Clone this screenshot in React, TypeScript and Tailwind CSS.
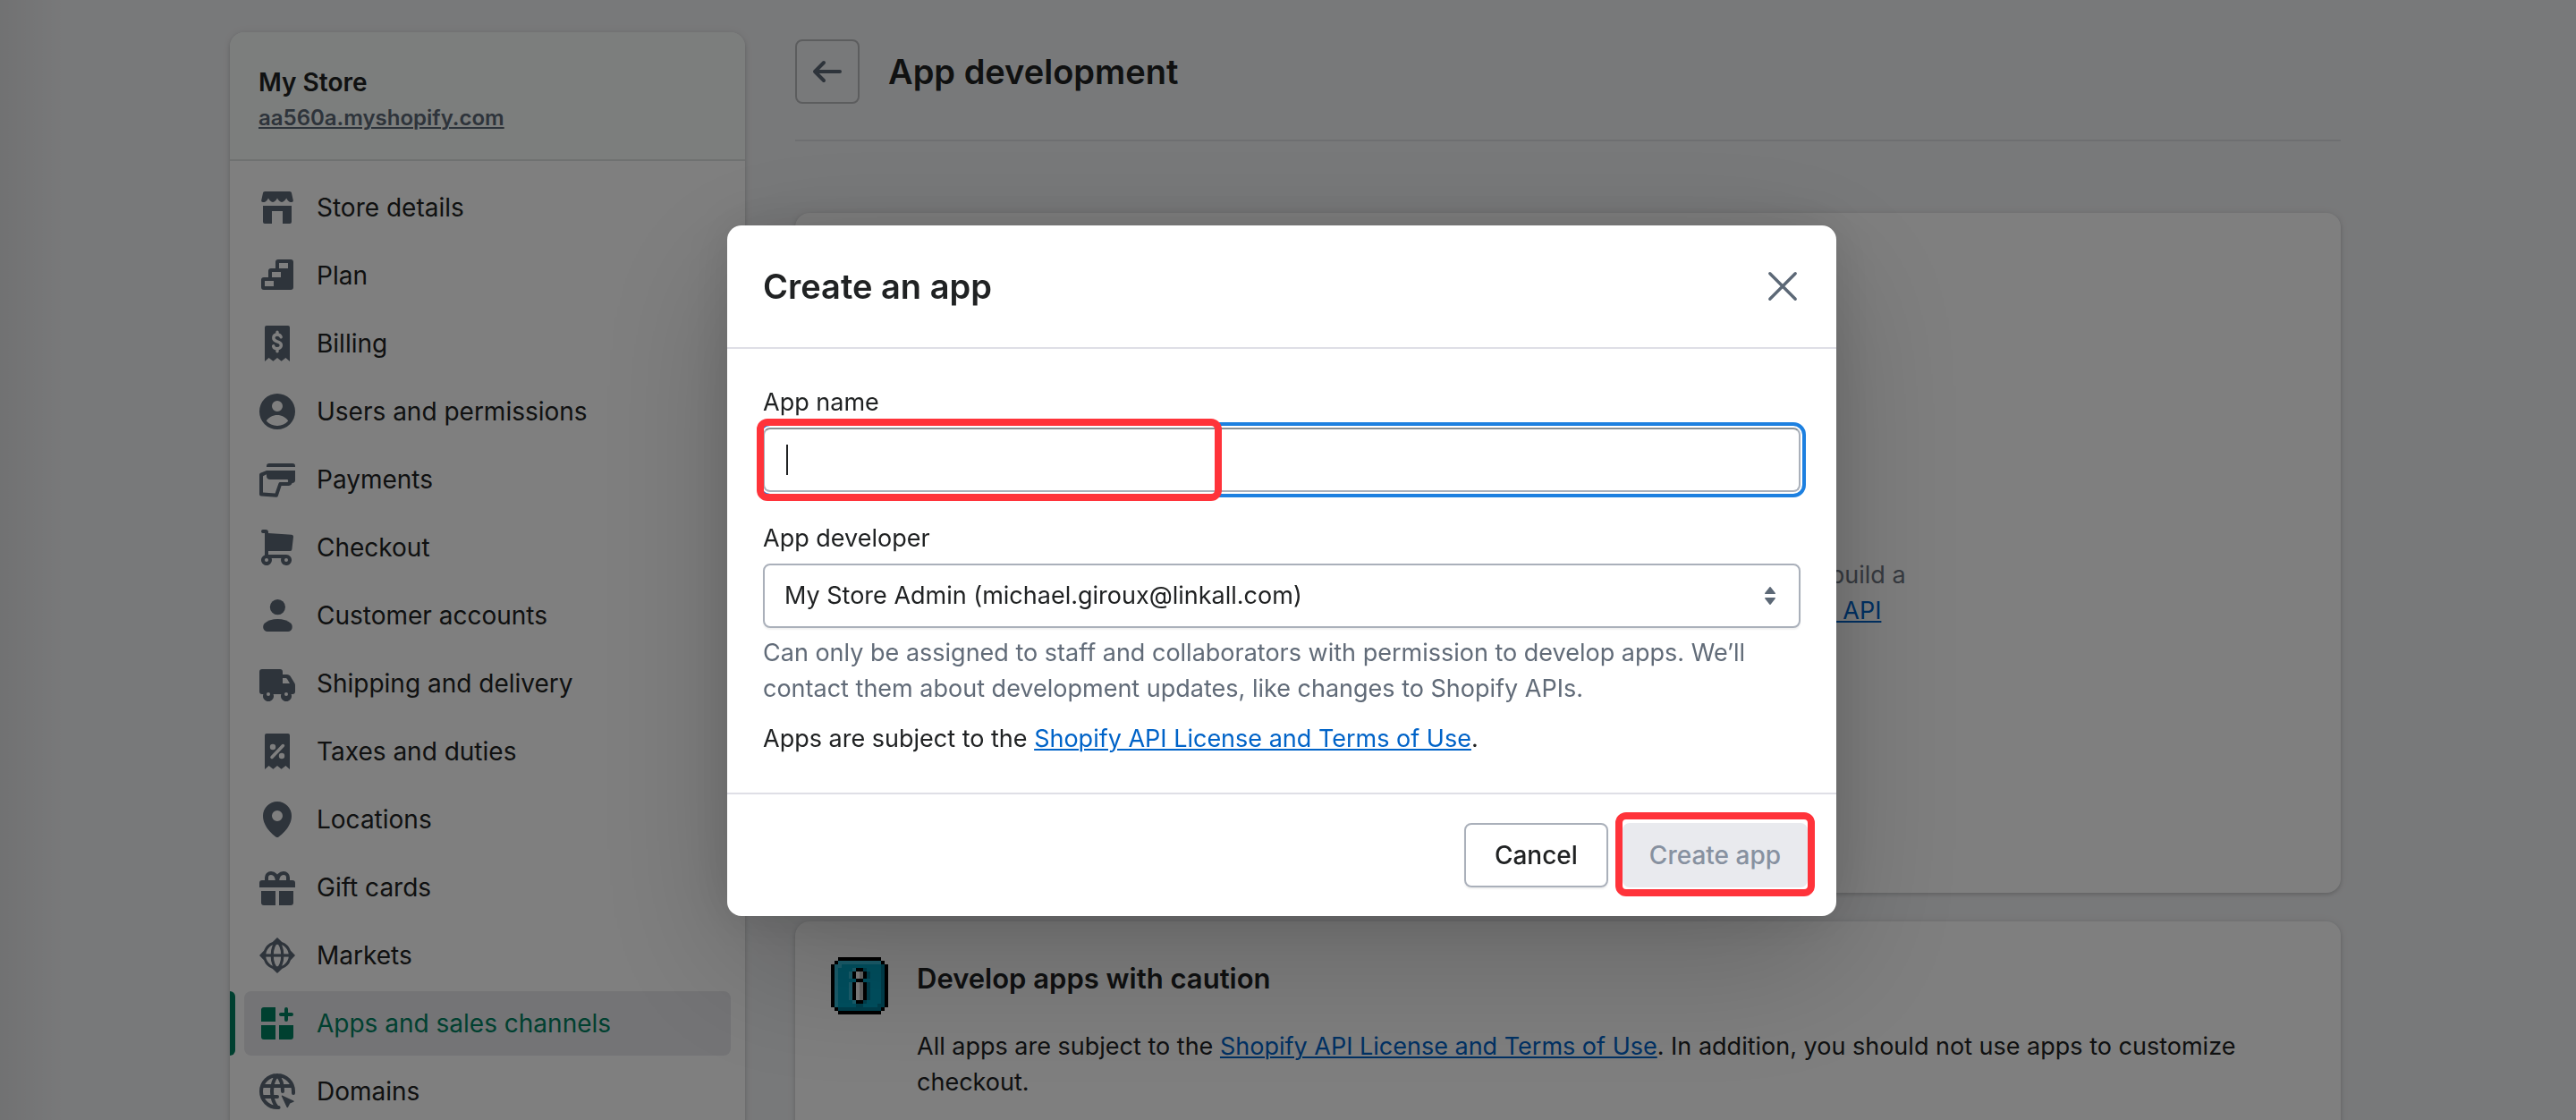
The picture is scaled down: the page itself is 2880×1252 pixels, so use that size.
import { type ReactNode } from "react";

type NavEntry = { label: string; icon: ReactNode; active?: boolean };

const zigzagReceipt =
  "M4 0h12a1 1 0 0 1 1 1v19l-2.3-2-2.4 1.9L10 18l-2.3 1.9L5.3 18 3 20V1a1 1 0 0 1 1-1z";

const entries: NavEntry[] = [
  {
    label: "Store details",
    icon: (
      <>
        <path d="M3.1 1h13.8c.6 0 1 .4 1.1.9l.9 4.1c.1.6-.3 1-.9 1h-.6c-1 0-1.7-1-2.3-2.2C14.400 6 13.500 7 12.500 7S10.600 6 10 4.800C9.400 6 8.500 7 7.500 7S5.600 6 5 4.800C4.400 6 3.700 7 2.700 7H2c-.6 0-1-.4-.9-1L2 1.900c.1-.5.500-.9 1.100-.9z" />
        <path d="M2 9h16v9a1 1 0 0 1-1 1h-4v-7H7v7H3a1 1 0 0 1-1-1z" />
      </>
    ),
  },
  {
    label: "Plan",
    icon: (
      <path
        fillRule="evenodd"
        d="M10.500 1h7A1.500 1.500 0 0 1 19 2.500v14a1.500 1.500 0 0 1-1.500 1.500h-15A1.500 1.500 0 0 1 1 16.500v-4A1.500 1.500 0 0 1 2.500 11H5V7.500A1.500 1.500 0 0 1 6.500 6H9V2.500A1.500 1.500 0 0 1 10.500 1zM11 3v3h5V3zM7 8v3h5V8zM3 13v3h5v-3z"
      />
    ),
  },
  {
    label: "Billing",
    icon: (
      <>
        <path d={zigzagReceipt} />
        <path
          d="M12.100 6.400C11.800 5.500 11 5 10 5c-1.200 0-2.100.7-2.100 1.900 0 1.300 1 1.700 2.100 2s2.200.8 2.200 2.100c0 1.200-1 1.900-2.200 1.900-1.100 0-2-.5-2.200-1.500M10 3.600V5m0 8v1.400"
          fill="none"
          stroke="#fff"
          strokeWidth="1.700"
          strokeLinecap="round"
        />
      </>
    ),
  },
  {
    label: "Users and permissions",
    icon: (
      <path
        fillRule="evenodd"
        d="M10 0a10 10 0 1 0 0 20 10 10 0 0 0 0-20zm0 4a3 3 0 1 1 0 6 3 3 0 0 1 0-6zM3.900 15.300C5.200 13.200 7.500 12 10 12s4.800 1.200 6.100 3.300A8 8 0 0 1 10 18a8 8 0 0 1-6.100-2.700z"
      />
    ),
  },
  {
    label: "Payments",
    icon: (
      <>
        <path d="M5.500 1h13A1.500 1.500 0 0 1 20 2.500V3H4v-.5A1.500 1.500 0 0 1 5.500 1z" />
        <path
          fillRule="evenodd"
          d="M4 5h16v5.500c0 .9-.7 1.500-1.700 1.500-.3.900-1.100 1.500-2.100 1.500h-3.900l-1.900 5.700a1 1 0 0 1-1 .7l-8.500-.7a1 1 0 0 1-.9-1V7.300a1 1 0 0 1 .6-.9zM4 7.100l-2 1V17.300l6.800.500 1.900-5.600a1 1 0 0 1 1-.7h4.100c.4-.3.400-1-.1-1.500H6a2 2 0 0 1-2-2z"
        />
      </>
    ),
  },
  {
    label: "Checkout",
    icon: (
      <path
        fillRule="evenodd"
        d="M2 0h1.500A1.500 1.500 0 0 1 5 1.500V2l13 .9c.6 0 1 .5 1 1.100l-.8 7a1 1 0 0 1-1 1H5v2h10a3 3 0 1 1-2.800 2H6.800A3 3 0 1 1 3 14.200V2H2a1 1 0 0 1 0-2zM4 16a1 1 0 1 0 0 2 1 1 0 0 0 0-2zm11 0a1 1 0 1 0 0 2 1 1 0 0 0 0-2z"
      />
    ),
  },
  {
    label: "Customer accounts",
    icon: (
      <>
        <circle cx="10.200" cy="5.300" r="4.300" />
        <path d="M10.200 12c3 0 5.700.9 7.400 2.400 1.500 1.700.7 4.600-1.600 4.600H4.500c-2.300 0-3.200-2.900-1.600-4.600C4.600 12.900 7.200 12 10.200 12z" />
      </>
    ),
  },
  {
    label: "Shipping and delivery",
    icon: (
      <path
        fillRule="evenodd"
        d="M1.500 2h10A1.500 1.500 0 0 1 13 3.500V5h2.400c.9 0 1.700.5 2.100 1.300l2.200 3.600c.2.300.3.700.3 1.100v3.500a1.500 1.500 0 0 1-1.500 1.500h-.7a3 3 0 1 1-5.600 0H7.800a3 3 0 1 1-5.600 0h-.7A1.500 1.500 0 0 1 0 14.500v-11A1.500 1.500 0 0 1 1.500 2zM13 7v3h4l-1.500-2.500a1 1 0 0 0-.9-.5zM5 15a1 1 0 1 0 0 2 1 1 0 0 0 0-2zm10 0a1 1 0 1 0 0 2 1 1 0 0 0 0-2z"
      />
    ),
  },
  {
    label: "Taxes and duties",
    icon: (
      <>
        <path d={zigzagReceipt} />
        <path d="M7 13.200L13.200 6.800" fill="none" stroke="#fff" strokeWidth="1.800" strokeLinecap="round" />
        <circle cx="7.500" cy="7.500" r="1.600" fill="#fff" />
        <circle cx="12.500" cy="12.500" r="1.600" fill="#fff" />
      </>
    ),
  },
  {
    label: "Locations",
    icon: (
      <path
        fillRule="evenodd"
        d="M10 0a8 8 0 0 0-8 8c0 6.600 6.500 11.300 7.200 11.700a1.400 1.400 0 0 0 1.600 0C11.500 19.300 18 14.600 18 8a8 8 0 0 0-8-8zm0 5a3 3 0 1 1 0 6 3 3 0 0 1 0-6z"
      />
    ),
  },
  {
    label: "Gift cards",
    icon: (
      <>
        <path d="M4 6.500V4.500a2.500 2.500 0 0 1 2.500-2.500C8.500 2 9.700 3.500 10 6.500 10.300 3.500 11.500 2 13.500 2A2.500 2.500 0 0 1 16 4.500v2" fill="none" stroke="currentColor" strokeWidth="2" />
        <path d="M1.500 6h17A1.500 1.500 0 0 1 20 7.500V10H0V7.500A1.500 1.500 0 0 1 1.500 6zM1 12h8v8H2.500A1.500 1.500 0 0 1 1 18.500zM11 12h8v6.500a1.500 1.500 0 0 1-1.500 1.500H11z" />
      </>
    ),
  },
  {
    label: "Markets",
    icon: (
      <>
        <path
          fillRule="evenodd"
          d="M10 0l2.600 2.500a8 8 0 0 1 4.900 4.900L20 10l-2.500 2.600a8 8 0 0 1-4.900 4.900L10 20l-2.600-2.500a8 8 0 0 1-4.900-4.900L0 10l2.500-2.600a8 8 0 0 1 4.900-4.900zM10 3.600a6.400 6.400 0 1 0 0 12.800 6.400 6.400 0 0 0 0-12.800z"
        />
        <path d="M3 10h14" fill="none" stroke="currentColor" strokeWidth="1.600" />
        <ellipse cx="10" cy="10" rx="2.900" ry="7" fill="none" stroke="currentColor" strokeWidth="1.600" />
      </>
    ),
  },
  {
    label: "Apps and sales channels",
    active: true,
    icon: (
      <>
        <path d="M2.500 1H9v8H1V2.500A1.500 1.500 0 0 1 2.500 1zM1 11h8v8H2.500A1.500 1.500 0 0 1 1 17.500zM11 11h8v6.500a1.500 1.500 0 0 1-1.500 1.500H11z" />
        <path d="M15 2v6M12 5h6" fill="none" stroke="currentColor" strokeWidth="2" strokeLinecap="round" />
      </>
    ),
  },
  {
    label: "Domains",
    icon: (
      <>
        <path
          d="M10.800 19H10A9 9 0 1 1 19 10v1M2 7h16M2 13h8M10 1C6 5.500 6 14.500 10 19M10 1c1.900 1.800 3 5 3 9"
          fill="none"
          stroke="currentColor"
          strokeWidth="2"
          strokeLinecap="round"
        />
        <path d="M12.700 12.300l6.400 2.900c.4.200.3.600 0 .7l-2 .8-1.100 2.200c-.2.300-.5.300-.7 0l-2.900-6.300c-.1-.3.100-.4.300-.3z" />
      </>
    ),
  },
];

function NavItem({ label, icon, active }: NavEntry) {
  return (
    <li className="relative px-4">
      {active && <span className="absolute inset-y-0 left-0 w-1.5 rounded-r-md bg-[#008060]" />}
      <a
        href="#"
        aria-current={active ? "page" : undefined}
        className={
          active
            ? "flex h-[72px] items-center gap-6 rounded-lg bg-[#e8e9ec] px-[17px] text-[#008060]"
            : "flex h-[72px] items-center gap-6 rounded-lg px-[17px] text-[#202223]"
        }
      >
        <svg
          viewBox="0 0 20 20"
          fill="currentColor"
          aria-hidden="true"
          className={active ? "size-10 shrink-0" : "size-10 shrink-0 text-[#5c6876]"}
        >
          {icon}
        </svg>
        <span>{label}</span>
      </a>
    </li>
  );
}

function Sidebar() {
  return (
    <aside className="w-[576px] shrink-0 overflow-hidden rounded-2xl bg-white text-[28px] shadow-[0_0_10px_rgba(23,24,24,0.08),0_2px_4px_rgba(0,0,0,0.15)]">
      <header className="border-b-2 border-[#dfe3e2] bg-[#f9fcfa] px-8 pt-9 pb-[26px]">
        <h2 className="text-[28px] leading-10 font-semibold">My Store</h2>
        <a href="#" className="block text-[24px] leading-10 font-semibold text-[#5c6876] underline decoration-2 underline-offset-2">
          aa560a.myshopify.com
        </a>
      </header>
      <nav aria-label="Settings" className="py-4">
        <ul className="flex flex-col gap-1">
          {entries.map((entry) => (
            <NavItem key={entry.label} {...entry} />
          ))}
        </ul>
      </nav>
    </aside>
  );
}

function PixelInfo() {
  return (
    <svg viewBox="0 0 16 16" className="size-16 shrink-0" shapeRendering="crispEdges" aria-hidden="true">
      <path d="M2 0h12v1h1v1h1v12h-1v1h-1v1H2v-1H1v-1H0V2h1V1h1z" fill="#000" />
      <path d="M2 1h12v1h1v12h-1v1H2v-1H1V2h1z" fill="#00a0c0" />
      <path d="M2 1h12v1H3v1H2v11H1V2h1zM5 4h1v2H5zM5 7h1v5H5zM6 3h1v1H6zM6 12h1v1H6z" fill="#36bbd8" />
      <path d="M14 2h1v12h-1v1H2v-1h11v-1h1zM10 4h1v2h-1zM10 7h1v5h-1zM9 3h1v1H9zM9 12h1v1H9zM7 13h2v1H7z" fill="#007c98" />
      <path d="M7 3h2v1h1v2H9v1h1v5H9v1H7v-1H6V7h1V6H6V4h1z" fill="#000" />
      <path d="M7 4h1v2H7zM7 7h1v5H7z" fill="#fff" />
      <path d="M8 4h1v2H8zM8 7h1v5H8z" fill="#c8c8c8" />
    </svg>
  );
}

function Main() {
  return (
    <main className="min-w-0 flex-1">
      <header className="flex items-center gap-8 border-b-2 border-[#dddfe2] pt-2 pb-10">
        <button
          type="button"
          aria-label="Back"
          className="flex size-[72px] items-center justify-center rounded-lg border-2 border-[#b8babd] text-[#5c6876]"
        >
          <svg viewBox="0 0 20 20" className="size-10" fill="none" stroke="currentColor" strokeWidth="2" strokeLinecap="round" strokeLinejoin="round" aria-hidden="true">
            <path d="M17 10H3M8 5l-5 5 5 5" />
          </svg>
        </button>
        <h1 className="text-[38px] leading-[48px] font-semibold">App development</h1>
      </header>

      <section className="mt-20 flex h-[760px] flex-col items-center justify-center rounded-2xl bg-white pt-[90px] text-center leading-10 text-[#6d7580] shadow-[0_0_10px_rgba(23,24,24,0.08),0_2px_4px_rgba(0,0,0,0.15)]">
        <p className="max-w-[800px]">
          Create an app to get credentials that help your team build a
          <br />
          <a href="#" className="text-[#0063c8] underline decoration-2 underline-offset-2">
            custom integration for this store through the Admin API
          </a>
        </p>
      </section>

      <section className="mt-8 flex gap-8 rounded-2xl bg-white p-10 pb-16 shadow-[0_0_10px_rgba(23,24,24,0.08),0_2px_4px_rgba(0,0,0,0.15)]">
        <PixelInfo />
        <div className="min-w-0">
          <h2 className="text-[31px] leading-[48px] font-semibold">Develop apps with caution</h2>
          <p className="mt-8 leading-10">
            All apps are subject to the{" "}
            <a href="#" className="text-[#0063c8] underline decoration-2 underline-offset-2">
              Shopify API License and Terms of Use
            </a>
            . In addition, you should not use apps to customize checkout.
          </p>
        </div>
      </section>
    </main>
  );
}

function CreateAppDialog() {
  return (
    <div className="fixed inset-0 flex items-center justify-center bg-black/50 pt-6 pr-3.5">
      <div
        role="dialog"
        aria-modal="true"
        aria-labelledby="dialog-title"
        className="w-[1240px] max-w-full rounded-2xl bg-white shadow-[0_52px_160px_rgba(0,0,0,0.2),0_0_60px_rgba(0,0,0,0.12)]"
      >
        <header className="flex items-center justify-between border-b-2 border-[#dfdfe6] px-10 py-11">
          <h2 id="dialog-title" className="text-[38px] leading-[48px] font-semibold">
            Create an app
          </h2>
          <button type="button" aria-label="Close" className="text-[#5c6876]">
            <svg viewBox="0 0 20 20" className="size-10" fill="none" stroke="currentColor" strokeWidth="1.700" strokeLinecap="round" aria-hidden="true">
              <path d="M2.900 2.900l14.200 14.200M17.100 2.900L2.900 17.100" />
            </svg>
          </button>
        </header>

        <form id="create-app" className="px-10 pt-10 pb-10">
          <label htmlFor="app-name" className="block leading-10">
            App name
          </label>
          <div className="relative mt-2">
            <input
              id="app-name"
              type="text"
              className="block h-[72px] w-full rounded-lg border-2 border-[#aab0ba] border-t-[#8a9196] px-6 outline-4 outline-offset-2 outline-[#1d80e0]"
            />
            <span className="absolute top-[19px] left-[26px] h-[34px] w-0.5 bg-[#202223]" />
            <span className="pointer-events-none absolute -top-2.5 -bottom-2.5 -left-[7px] w-[520px] rounded-xl border-8 border-[#ff333a]" />
          </div>

          <label htmlFor="app-developer" className="mt-8 block leading-10">
            App developer
          </label>
          <div className="relative mt-2">
            <select
              id="app-developer"
              className="block h-[72px] w-full appearance-none rounded-lg border-2 border-[#aab0ba] bg-white px-[22px] shadow-[0_2px_2px_rgba(0,0,0,0.06)]"
            >
              <option>My Store Admin (michael.giroux@linkall.com)</option>
            </select>
            <svg viewBox="0 0 12 20" className="pointer-events-none absolute top-[26px] right-7 h-5 w-3" fill="#5c6876" aria-hidden="true">
              <path d="M5.200.5L.3 6.800C-.2 7.400.1 8 .8 8h10.400c.7 0 1-.6.5-1.200L6.800.5a1 1 0 0 0-1.600 0zM5.200 19.500L.3 13.200C-.2 12.600.1 12 .8 12h10.400c.7 0 1 .6.500 1.200l-4.900 6.300a1 1 0 0 1-1.600 0z" />
            </svg>
          </div>

          <p className="mt-2 leading-10 text-[#616b78]">
            Can only be assigned to staff and collaborators with permission to develop apps. We’ll
            <br />
            contact them about development updates, like changes to Shopify APIs.
          </p>
          <p className="mt-4 leading-10">
            Apps are subject to the{" "}
            <a href="#" className="text-[#0063c8] underline decoration-2 underline-offset-2">
              Shopify API License and Terms of Use
            </a>
            .
          </p>
        </form>

        <footer className="flex justify-end gap-4 border-t-2 border-[#dfdfe6] p-8 text-[28px]">
          <button
            type="button"
            className="h-[72px] rounded-lg border-2 border-[#aab0ba] px-8 font-medium shadow-[0_2px_2px_rgba(0,0,0,0.06)]"
          >
            Cancel
          </button>
          <div className="relative">
            <button type="submit" form="create-app" disabled className="h-[72px] rounded-lg bg-[#e9eaee] px-[30px] font-medium text-[#8791a0]">
              Create app
            </button>
            <span className="pointer-events-none absolute -inset-x-2 -top-3 -bottom-2.5 rounded-xl border-8 border-[#ff333a]" />
          </div>
        </footer>
      </div>
    </div>
  );
}

export default function App() {
  return (
    <div className="h-screen overflow-hidden bg-[#f1f2f4] font-['Inter',sans-serif] text-[27px] text-[#202223]">
      <div className="h-full bg-linear-to-r from-black/6 to-transparent to-[70px] pr-1.5">
        <div className="mx-auto flex max-w-[2360px] items-start gap-14 pt-9">
          <Sidebar />
          <Main />
        </div>
      </div>
      <CreateAppDialog />
    </div>
  );
}
